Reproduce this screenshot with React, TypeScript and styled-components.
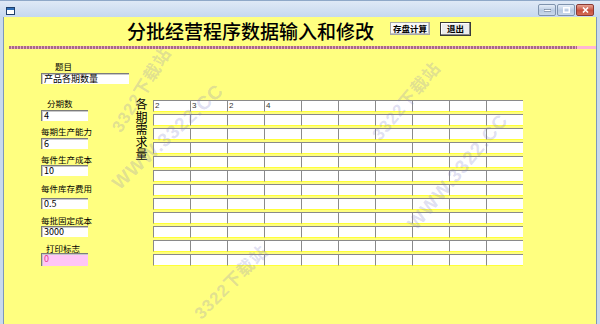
import React from 'react';
import styled, { createGlobalStyle } from 'styled-components';

const GlobalStyle = createGlobalStyle`
  html, body {
    margin: 0;
    padding: 0;
    background: #fff;
  }
  body {
    font-family: "Noto Sans CJK SC", "Liberation Sans", sans-serif;
  }
`;

const Window = styled.div`
  width: 600px;
  height: 324px;
  display: flex;
  flex-direction: column;
  overflow: hidden;
  background: #c8d9ee;
  padding: 0 3px;
  box-sizing: border-box;
  border-top: 1px solid #8fa8c8;
`;

const TitleBar = styled.div`
  height: 16px;
  flex-shrink: 0;
  display: flex;
  align-items: flex-start;
  padding: 3px 0 0 3px;
  box-sizing: border-box;
  margin: 0 -3px;
  background: linear-gradient(#dfe9f6, #c6d8ee);
`;

const AppIcon = styled.svg`
  width: 9px;
  height: 8px;
  margin-top: 3px;
  margin-left: 3px;
`;

const Controls = styled.div`
  margin-left: auto;
  margin-right: 6px;
  display: flex;
  gap: 1px;
`;

const CtrlButton = styled.div<{ $close?: boolean }>`
  width: 18px;
  height: 12px;
  box-sizing: border-box;
  border: 1px solid ${(p) => (p.$close ? '#8a3a34' : '#7f93ad')};
  border-radius: 2px;
  background: ${(p) =>
    p.$close
      ? 'linear-gradient(#e8a493, #c7503d 55%, #d46c55)'
      : 'linear-gradient(#e6eef8, #b9cbe2 55%, #c9d8ea)'};
  display: flex;
  align-items: center;
  justify-content: center;
`;

const Client = styled.div`
  flex: 1;
  position: relative;
  background: #ffff80;
  border-left: 1px solid #7d98bb;
  border-right: 1px solid #7d98bb;
  overflow: hidden;
`;

const Header = styled.div`
  display: flex;
  align-items: flex-start;
  padding: 4px 0 0 123px;
  height: 19px;
`;

const Heading = styled.h1`
  margin: 0;
  font-size: 19px;
  line-height: 19px;
  font-weight: 500;
  color: #000;
  letter-spacing: 0;
`;

const PushButton = styled.div<{ $default?: boolean; $w: number }>`
  width: ${(p) => p.$w}px;
  height: ${(p) => (p.$default ? 14 : 13)}px;
  box-sizing: border-box;
  margin-left: ${(p) => (p.$default ? 10 : 16)}px;
  margin-top: 1px;
  background: ${(p) => (p.$default ? '#ececec' : '#f8f8f8')};
  border: 1px solid ${(p) => (p.$default ? '#3a3a3a' : '#a8a8a8')};
  box-shadow: ${(p) =>
    p.$default ? 'inset -1px -1px #888, inset 1px 1px #fff' : 'inset -1px -1px #c4c4c4'};
  font-size: 8.5px;
  line-height: 11px;
  font-weight: 700;
  text-align: center;
  color: #000;
`;

const Separator = styled.div`
  display: flex;
  height: 3px;
  margin: 6px 0 0 5px;
`;

const Dotted = styled.div`
  flex: 1;
  background: repeating-linear-gradient(90deg, #a86a86 0 2px, #e7a7c3 2px 3px);
`;

const DottedEnd = styled.div`
  width: 19px;
  background: #ffb6d4;
`;

const Body = styled.div`
  display: flex;
  padding-left: 37px;
`;

const Form = styled.div`
  width: 94px;
  display: flex;
  flex-direction: column;
`;

const Label = styled.div<{ $before: number; $indent: number }>`
  margin-top: ${(p) => p.$before}px;
  padding-left: ${(p) => p.$indent}px;
  font-size: 8.5px;
  line-height: 12px;
  height: 12px;
  color: #000;
  white-space: nowrap;
`;

const Field = styled.div<{ $after: number; $w: number; $pink?: boolean }>`
  margin-top: ${(p) => p.$after}px;
  width: ${(p) => p.$w}px;
  height: ${(p) => (p.$pink ? 13 : 11)}px;
  box-sizing: border-box;
  background: ${(p) => (p.$pink ? '#ffc6f6' : '#fff')};
  border-top: 1px solid #7c7c7c;
  border-left: 1px solid #7c7c7c;
  box-shadow: inset 1px 1px #c8c8c8;
  padding-left: 2px;
  font-size: 9px;
  line-height: 10px;
  color: ${(p) => (p.$pink ? '#e0408a' : '#000')};
  white-space: nowrap;
  overflow: hidden;
`;

const VerticalLabel = styled.div`
  margin-top: 49px;
  width: 13px;
  margin-right: 5px;
  align-self: flex-start;
  font-size: 12px;
  line-height: 12.5px;
  text-align: center;
  word-break: break-all;
  color: #000;
`;

const Grid = styled.div`
  margin-top: 51px;
  display: grid;
  grid-template-columns: repeat(10, 37px);
  row-gap: 2px;
`;

const Cell = styled.div`
  height: 12px;
  box-sizing: border-box;
  background: #fff;
  border-top: 1px solid #8a8a8a;
  border-left: 1px solid #8a8a8a;
  border-bottom: 1px solid #ffff38;
  padding-left: 1px;
  font-size: 8px;
  line-height: 9px;
  color: #333;
  font-family: "Liberation Sans", sans-serif;
`;

const Watermark = styled.div<{ $x: number; $y: number; $a: number; $size: number }>`
  position: absolute;
  left: ${(p) => p.$x}px;
  top: ${(p) => p.$y}px;
  transform: translate(-50%, -50%) rotate(${(p) => p.$a}deg);
  font-family: "Liberation Sans", "Noto Sans CJK SC", sans-serif;
  font-weight: 700;
  font-size: ${(p) => p.$size}px;
  letter-spacing: 1px;
  white-space: nowrap;
  color: rgba(120, 120, 200, 0.24);
  pointer-events: none;
`;

const fields = [
  { label: '题目', value: '产品各期数量', indent: 14, before: 11, after: 1, w: 88 },
  { label: '分期数', value: '4', indent: 6, before: 13, after: 1, w: 47 },
  { label: '每期生产能力', value: '6', indent: 0, before: 4, after: 1, w: 47 },
  { label: '每件生产成本', value: '10', indent: 0, before: 4, after: 0, w: 47 },
  { label: '每件库存费用', value: '0.5', indent: 0, before: 6, after: 4, w: 47 },
  { label: '每批固定成本', value: '3000', indent: 0, before: 5, after: 0, w: 47 },
];

const demand = ['2', '3', '2', '4'];

const marks = [
  { text: 'WWW.3322.CC', x: 164, y: 120, a: -43, size: 19 },
  { text: '3322下载站', x: 136, y: 72, a: -58, size: 17 },
  { text: 'WWW.3322.CC', x: 454, y: 155, a: -50, size: 19 },
  { text: '3322下载站', x: 401, y: 83, a: -50, size: 17 },
  { text: '3322下载站', x: 226, y: 264, a: -45, size: 17 },
];

export default function App() {
  return (
    <>
      <GlobalStyle />
      <Window>
        <TitleBar>
          <AppIcon viewBox="0 0 9 8">
            <rect x="0.5" y="0.5" width="8" height="7" fill="#fff" stroke="#1f3f6a" />
            <rect x="1" y="1" width="7" height="2" fill="#2f6fb8" />
          </AppIcon>
          <Controls>
            <CtrlButton>
              <svg width="7" height="3" viewBox="0 0 7 3">
                <rect x="0" y="0.5" width="7" height="2" fill="#fff" stroke="#435a78" strokeWidth="0.5" />
              </svg>
            </CtrlButton>
            <CtrlButton>
              <svg width="7" height="6" viewBox="0 0 7 6">
                <rect x="0.75" y="0.75" width="5.5" height="4.5" fill="none" stroke="#fff" strokeWidth="1.5" />
              </svg>
            </CtrlButton>
            <CtrlButton $close>
              <svg width="7" height="6" viewBox="0 0 7 6">
                <path d="M1 0.5 L6 5.5 M6 0.5 L1 5.5" stroke="#fff" strokeWidth="1.6" />
              </svg>
            </CtrlButton>
          </Controls>
        </TitleBar>
        <Client>
          <Header>
            <Heading>分批经营程序数据输入和修改</Heading>
            <PushButton $w={40}>存盘计算</PushButton>
            <PushButton $w={31} $default>
              退出
            </PushButton>
          </Header>
          <Separator>
            <Dotted />
            <DottedEnd />
          </Separator>
          <Body>
            <Form>
              {fields.map((f) => (
                <React.Fragment key={f.label}>
                  <Label $before={f.before} $indent={f.indent}>
                    {f.label}
                  </Label>
                  <Field $after={f.after} $w={f.w}>
                    {f.value}
                  </Field>
                </React.Fragment>
              ))}
              <Label $before={5} $indent={5}>
                打印标志
              </Label>
              <Field $after={-1} $w={47} $pink>
                0
              </Field>
            </Form>
            <VerticalLabel>各期需求量</VerticalLabel>
            <Grid>
              {Array.from({ length: 120 }, (_, i) => (
                <Cell key={i}>{i < demand.length ? demand[i] : ''}</Cell>
              ))}
            </Grid>
          </Body>
          {marks.map((m, i) => (
            <Watermark key={i} $x={m.x} $y={m.y} $a={m.a} $size={m.size}>
              {m.text}
            </Watermark>
          ))}
        </Client>
      </Window>
    </>
  );
}
